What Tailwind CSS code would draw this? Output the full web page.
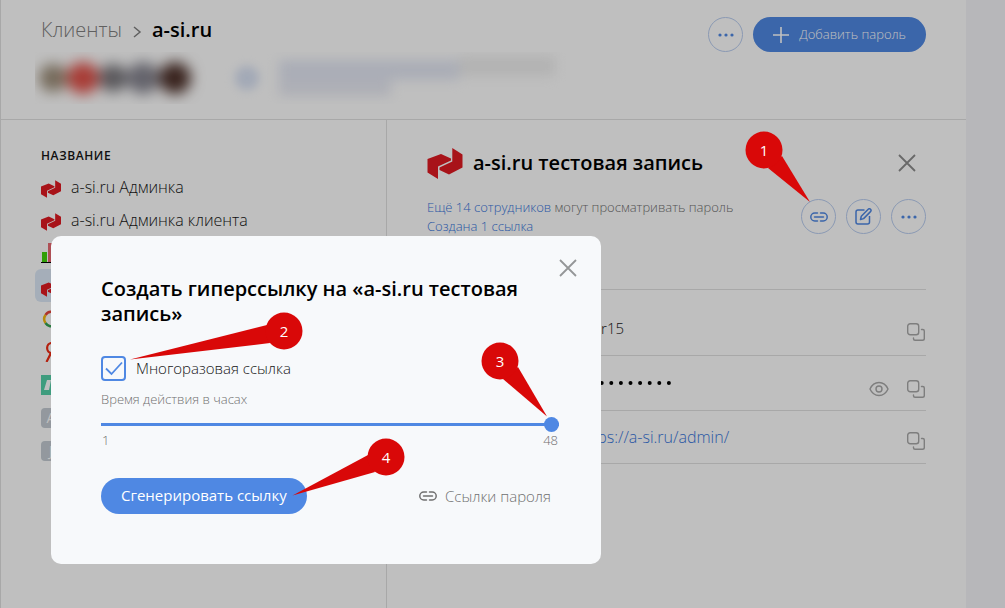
<!DOCTYPE html>
<html lang="ru">
<head>
  <meta charset="UTF-8">
  <meta name="viewport" content="width=device-width, initial-scale=1.0">
  <title>a-si.ru тестовая запись</title>
  <script src="https://cdn.jsdelivr.net/npm/@tailwindcss/browser@4"></script>
</head>
<body class="relative min-h-screen overflow-hidden bg-[#f4f5f9] font-['Open_Sans',sans-serif] text-[#151515]">

  <!-- Shared icons -->
  <svg class="hidden" aria-hidden="true">
    <symbol id="logo" viewBox="0 0 35 31">
      <path fill="#e01a22" d="M0 11 13.500 6 23.500 10.500V12.500L10.500 18.500V31L0 24.500zM24.800 0 35 6.500V19.500L21.500 26.500 12 22V19.500L24.800 13.500z"/>
    </symbol>
    <symbol id="link" viewBox="0 0 18 10">
      <g fill="none" stroke="currentColor" stroke-width="1.500" stroke-linecap="round">
        <path d="M7.500 1H4.800a4 4 0 0 0 0 8h2.700M10.500 1h2.700a4 4 0 0 1 0 8h-2.700M4.500 5h9"/>
      </g>
    </symbol>
    <symbol id="copy" viewBox="0 0 18 18">
      <g fill="none" stroke="currentColor" stroke-width="1.400" stroke-linecap="round">
        <rect x=".7" y=".7" width="11" height="11" rx="2.500"/>
        <path d="M14.500 6.500h1.300a1.500 1.500 0 0 1 1.500 1.500v7.500a1.800 1.800 0 0 1-1.800 1.800H8a1.500 1.500 0 0 1-1.500-1.500v-.8"/>
      </g>
    </symbol>
    <symbol id="close" viewBox="0 0 18 18">
      <path fill="none" stroke="currentColor" stroke-width="1.800" d="M1 1l16 16M17 1 1 17"/>
    </symbol>
    <symbol id="dots" viewBox="0 0 16 4">
      <g fill="currentColor"><circle cx="2" cy="2" r="1.600"/><circle cx="8" cy="2" r="1.600"/><circle cx="14" cy="2" r="1.600"/></g>
    </symbol>
  </svg>

  <div class="mr-[39px] flex min-h-screen flex-col border-l border-[#e0e0e0] bg-white">

    <!-- Header -->
    <header class="h-[120px] border-b border-[#e0e0e0] pl-10 pr-10 pt-4">
      <div class="flex items-start justify-between">
        <nav class="flex items-center gap-2.5 text-xl leading-7">
          <a href="#" class="font-light text-[#808080]">Клиенты</a>
          <svg class="mt-1 h-3 w-2.5" viewBox="0 0 10 12" fill="none" stroke="#808080" stroke-width="1.500"><path d="M2 1l6 5-6 5"/></svg>
          <a href="#" class="font-semibold text-black">a-si.ru</a>
        </nav>
        <div class="mt-px flex gap-2.5">
          <button class="flex size-[35px] items-center justify-center rounded-full border border-[#b9cdf0] text-[#4f88e3]" aria-label="Ещё">
            <svg class="h-1 w-4"><use href="#dots"/></svg>
          </button>
          <button class="flex h-[35px] items-center gap-2.5 rounded-full bg-[#4f88e3] px-5 text-[13px] font-light text-white">
            <svg class="size-4" viewBox="0 0 16 16" stroke="#fff" stroke-width="1.600"><path d="M8 0v16M0 8h16"/></svg>
            Добавить пароль
          </button>
        </div>
      </div>
      <div class="-ml-1.5 flex items-center overflow-hidden py-2" aria-hidden="true">
        <div class="flex h-9 items-center pl-1 blur-[7px]">
          <div class="size-7 rounded-full bg-[#9c8d78]"></div>
          <div class="size-8 rounded-full bg-[#e05048]"></div>
          <div class="size-7 rounded-full bg-[#77757a]"></div>
          <div class="size-8 rounded-full bg-[#85848f]"></div>
          <div class="size-8 rounded-full bg-[#4d3029]"></div>
        </div>
        <div class="ml-11 size-6 rounded-full bg-[#d9e2f4] blur-[5px]"></div>
        <div class="ml-5 blur-[6px]">
          <div class="flex"><div class="h-5 w-[180px] bg-[#e4e8f4]"></div><div class="-mt-1 h-5 w-24 bg-[#efefef]"></div></div>
          <div class="h-4 w-28 bg-[#e8eaf3]"></div>
        </div>
      </div>
    </header>

    <div class="flex grow">

      <!-- Password list -->
      <aside class="w-[386px] shrink-0 border-r border-[#e0e0e0] pl-[34px] pr-4 pt-7">
        <h2 class="pl-1.5 text-xs font-semibold leading-4 tracking-wider">НАЗВАНИЕ</h2>
        <ul class="mt-1.5 text-base font-light">
          <li class="flex h-[33px] items-center gap-2.5 pl-1.5"><svg class="mt-1 size-5"><use href="#logo"/></svg>a-si.ru Админка</li>
          <li class="flex h-[33px] items-center gap-2.5 pl-1.5"><svg class="mt-1 size-5"><use href="#logo"/></svg>a-si.ru Админка клиента</li>
          <li class="flex h-[33px] items-center pl-1.5">
            <svg class="size-5" viewBox="0 0 20 20"><path fill="#43d40a" d="M1 9h5v10H1z"/><path fill="#e86a72" d="M7 0h5v19H7z"/><path fill="#4a7be0" d="M13 5h5v14h-5z"/><path fill="#000" d="M0 19h20v1H0z"/></svg>
          </li>
          <li class="flex h-[33px] items-center rounded-md bg-[#dde9f7] pl-1.5"><svg class="mt-1 size-5"><use href="#logo"/></svg></li>
          <li class="flex h-[33px] items-center pl-1.5">
            <svg class="size-5" viewBox="0 0 20 20" fill="none" stroke-width="2.500"><path stroke="#e8443a" d="M4.500 6a7 7 0 0 1 11-1"/><path stroke="#f5b90f" d="M4.500 6a7 7 0 0 0 0 8"/><path stroke="#35a352" d="M4.500 14a7 7 0 0 0 10 2"/><path stroke="#4285f4" d="M14.500 16a7 7 0 0 0 2.500-6h-7"/></svg>
          </li>
          <li class="flex h-[33px] items-center pl-1.5">
            <svg class="size-5" viewBox="0 0 20 20" fill="none" stroke="#f02a12" stroke-width="2.200"><path d="M13.500 20V1H11C4.500 1 4.500 11 11 11h2.500M10 11l-4.500 9"/></svg>
          </li>
          <li class="flex h-[33px] items-center pl-1.5">
            <svg class="size-5" viewBox="0 0 20 20"><path fill="#55d0a8" d="M0 0h20v20H0z"/><path fill="#fff" d="M6 5h4l-2 10H3zM12 5h4l-2 10h-4z"/></svg>
          </li>
          <li class="flex h-[33px] items-center pl-1.5"><span class="flex size-5 items-center justify-center rounded bg-[#c4cbd3] text-sm font-normal text-white">A</span></li>
          <li class="flex h-[33px] items-center pl-1.5"><span class="flex size-5 items-center justify-center rounded bg-[#c4cbd3] text-sm font-normal text-white">J</span></li>
        </ul>
      </aside>

      <!-- Selected entry -->
      <main class="grow px-10 pt-[27px]">
        <div class="flex h-8 items-center justify-between">
          <h1 class="flex items-center gap-2.5 text-xl font-semibold text-black">
            <svg class="h-[31px] w-9"><use href="#logo"/></svg>
            a-si.ru тестовая запись
          </h1>
          <button class="mr-2.5 text-[#8c8c8c]" aria-label="Закрыть"><svg class="size-[18px]"><use href="#close"/></svg></button>
        </div>
        <div class="mt-5 flex h-[90px] items-start justify-between">
          <p class="-mt-px text-[13px] font-light leading-[19px] text-[#707070]">
            <a href="#" class="text-[#3876dc]">Ещё 14 сотрудников</a> могут просматривать пароль<br>
            <a href="#" class="text-[#3876dc]">Создана 1 ссылка</a>
          </p>
          <div class="flex gap-2.5 text-[#4f88e3]">
            <button class="flex size-[35px] items-center justify-center rounded-full border border-[#b9cdf0]" aria-label="Ссылка"><svg class="h-2.5 w-[18px]"><use href="#link"/></svg></button>
            <button class="flex size-[35px] items-center justify-center rounded-full border border-[#b9cdf0]" aria-label="Изменить">
              <svg class="size-[17px]" viewBox="0 0 17 17" fill="none" stroke="currentColor" stroke-width="1.500" stroke-linejoin="round"><path d="M9.500 2H3a2 2 0 0 0-2 2v10a2 2 0 0 0 2 2h9.500a2 2 0 0 0 2-2V8"/><path d="M5.500 11.500 6.300 8.300 13.200 1.300a1.500 1.500 0 0 1 2.300 2.300L8.600 10.600z"/></svg>
            </button>
            <button class="flex size-[35px] items-center justify-center rounded-full border border-[#b9cdf0]" aria-label="Ещё"><svg class="h-1 w-4"><use href="#dots"/></svg></button>
          </div>
        </div>
        <dl class="text-base font-light">
          <div class="flex h-[66px] items-center border-t border-[#e0e0e0] pt-3">
            <dt class="w-[150px]">Логин</dt>
            <dd class="flex grow items-center justify-between text-[15px]">user15
              <button class="mr-px mt-1.5 text-[#a8a8a8]" aria-label="Копировать логин"><svg class="size-[18px]"><use href="#copy"/></svg></button>
            </dd>
          </div>
          <div class="flex h-[55px] items-center border-t border-[#e0e0e0] pt-1.5">
            <dt class="w-[150px]">Пароль</dt>
            <dd class="flex grow items-center">
              <svg class="-mt-1.5 h-1 w-[94px]" viewBox="0 0 94 4" fill="none" stroke="#000" stroke-width="4" stroke-linecap="round" stroke-dasharray="0 9.600"><path d="M5.500 2H94"/></svg>
              <button class="ml-auto mr-[18px] mt-1.5 text-[#a8a8a8]" aria-label="Показать пароль">
                <svg class="h-4 w-5" viewBox="0 0 20 16" fill="none" stroke="currentColor" stroke-width="1.400"><path d="M1 8c2-4.500 5.500-6.500 9-6.500S17 3.500 19 8c-2 4.500-5.500 6.500-9 6.500S3 12.500 1 8z"/><circle cx="10" cy="8" r="3"/></svg>
              </button>
              <button class="mr-px mt-1.5 text-[#a8a8a8]" aria-label="Копировать пароль"><svg class="size-[18px]"><use href="#copy"/></svg></button>
            </dd>
          </div>
          <div class="flex h-[54px] items-center border-y border-[#e0e0e0]">
            <dt class="w-[150px]">URL</dt>
            <dd class="flex grow items-center justify-between"><a href="#" class="text-[#3876dc]">https://a-si.ru/admin/</a>
              <button class="mr-px mt-2 text-[#a8a8a8]" aria-label="Копировать адрес"><svg class="size-[18px]"><use href="#copy"/></svg></button>
            </dd>
          </div>
        </dl>
      </main>
    </div>
  </div>

  <!-- Backdrop -->
  <div class="absolute inset-0 bg-black/25"></div>

  <!-- Create link dialog -->
  <div role="dialog" aria-labelledby="dialog-title" class="absolute left-[51px] top-[236px] w-[550px] rounded-[10px] bg-[#f7f9fb] px-[50px] pb-[50px] pt-10">
    <button class="absolute right-6 top-[23px] text-[#949697]" aria-label="Закрыть"><svg class="size-[18px]"><use href="#close"/></svg></button>
    <h2 id="dialog-title" class="text-xl font-semibold leading-[25px] text-black">Создать гиперссылку на «a-si.ru тестовая запись»</h2>

    <label class="mt-[30px] flex items-center gap-2.5 text-[15px] font-light leading-[23px]">
      <span class="grid">
        <input type="checkbox" checked class="col-start-1 row-start-1 size-[25px] appearance-none rounded border-2 border-[#4f88e3]">
        <svg class="pointer-events-none col-start-1 row-start-1 size-[25px]" viewBox="0 0 25 25" fill="none" stroke="#4f88e3" stroke-width="1.800"><path d="M5 12.500 10.500 18 21 6.500"/></svg>
      </span>
      Многоразовая ссылка
    </label>

    <label for="hours" class="mt-2 block text-[13px] font-light leading-5 text-[#707070]">Время действия в часах</label>
    <input id="hours" type="range" min="1" max="48" value="48"
      class="mt-2 block h-[15px] w-[calc(100%+8px)] appearance-none bg-linear-to-r from-[#4f88e3] to-[#4f88e3] bg-[length:100%_3px] bg-center bg-no-repeat [&::-webkit-slider-thumb]:size-[15px] [&::-webkit-slider-thumb]:appearance-none [&::-webkit-slider-thumb]:rounded-full [&::-webkit-slider-thumb]:bg-[#4f88e3]">
    <div class="-mr-2 flex justify-between px-px text-[13px] font-light leading-4 text-[#707070]">
      <span>1</span>
      <span>48</span>
    </div>

    <div class="mt-[30px] flex items-center justify-between">
      <button class="h-9 rounded-full bg-[#4f88e3] px-5 pb-0.5 text-[15px] font-medium text-white">Сгенерировать ссылку</button>
      <a href="#" class="flex items-center gap-2 text-[15px] font-light text-[#707070]">
        <svg class="h-2.5 w-[18px]"><use href="#link"/></svg>
        Ссылки пароля
      </a>
    </div>
  </div>

  <!-- Step markers -->
  <svg class="pointer-events-none absolute left-0 top-0 h-[608px] w-[1005px]" viewBox="0 0 1005 608" fill="#d90808">
    <path d="M782 156 810 202 768 168z"/><circle cx="764" cy="150" r="18.500"/>
    <path d="M267 325 130 359.500 270 343z"/><circle cx="284" cy="331" r="18.500"/>
    <path d="M518 367 547 416.500 503 379z"/><circle cx="500" cy="361" r="18.500"/>
    <path d="M368 455 292.500 495.500 375 472z"/><circle cx="386" cy="457" r="18.500"/>
    <g fill="#fff" font-size="15" text-anchor="middle">
      <text x="764" y="156">1</text><text x="284" y="337">2</text><text x="500" y="367">3</text><text x="386" y="463">4</text>
    </g>
  </svg>

</body>
</html>
